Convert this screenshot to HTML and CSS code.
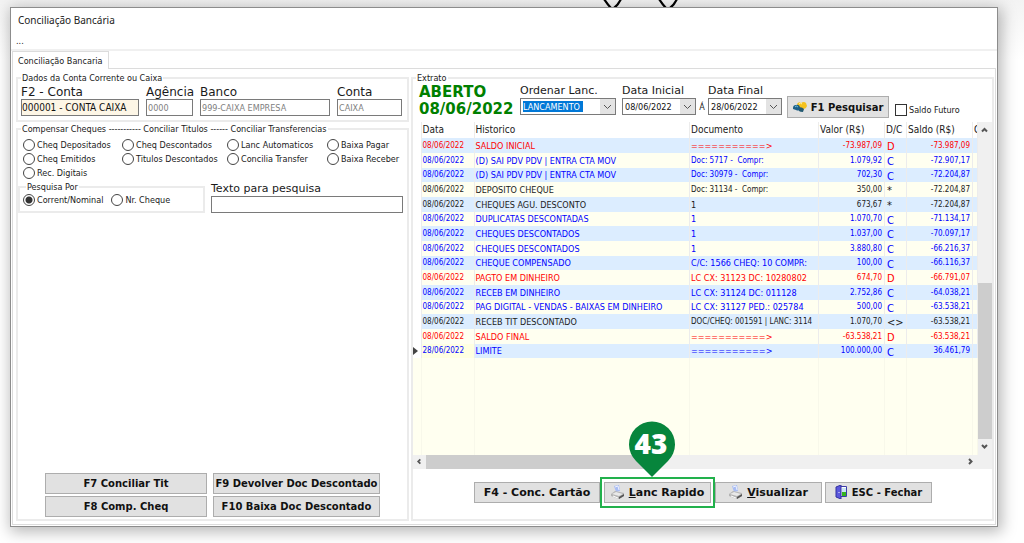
FILE: index.html
```html
<!DOCTYPE html>
<html lang="pt-BR">
<head>
<meta charset="utf-8">
<title>Conciliação Bancária</title>
<link rel="stylesheet" href="styles.css">
</head>
<body>
<svg class="backdrop" width="80" height="8" viewBox="0 0 80 8" aria-hidden="true"><path d="M4 -1C6 2 8 5 11 8M21 -1C19 3 17 6 14 8M59 -1C61 2 63 5 66 8M77 -1C75 3 73 6 70 8" fill="none" stroke="#000" stroke-width="2.2"/></svg>
<main class="window">
  <header class="titlebar">Conciliação Bancária</header>
  <nav class="menubar">...</nav>
  <div class="tabs"><button type="button" class="tab">Conciliação Bancaria</button></div>
  <div class="page">
    <section class="left">
      <fieldset class="group account">
        <legend>Dados da Conta Corrente ou Caixa</legend>
        <div class="account-row">
          <div class="field"><label for="conta">F2 - Conta</label><input id="conta" class="active" value="000001 - CONTA CAIXA"></div>
          <div class="field"><label for="agencia">Agência</label><input id="agencia" value="0000"></div>
          <div class="field"><label for="banco">Banco</label><input id="banco" value="999-CAIXA EMPRESA"></div>
          <div class="field"><label for="num">Conta</label><input id="num" value="CAIXA"></div>
        </div>
      </fieldset>
      <fieldset class="group actions">
        <legend>Compensar Cheques ----------- Conciliar Titulos ------ Conciliar Transferencias</legend>
        <div class="options">
          <label><input type="radio" name="op">Cheq Depositados</label>
          <label><input type="radio" name="op">Cheq Descontados</label>
          <label><input type="radio" name="op">Lanc Automaticos</label>
          <label><input type="radio" name="op">Baixa Pagar</label>
          <label><input type="radio" name="op">Cheq Emitidos</label>
          <label><input type="radio" name="op">Titulos Descontados</label>
          <label><input type="radio" name="op">Concilia Transfer</label>
          <label><input type="radio" name="op">Baixa Receber</label>
          <label><input type="radio" name="op">Rec. Digitais</label>
        </div>
        <div class="search">
          <fieldset class="group by">
            <legend>Pesquisa Por</legend>
            <label><input type="radio" name="by" checked>Corrent/Nominal</label>
            <label><input type="radio" name="by">Nr. Cheque</label>
          </fieldset>
          <div class="field"><label for="texto">Texto para pesquisa</label><input id="texto"></div>
        </div>
        <div class="left-buttons">
          <button type="button" class="btn small">F7 Conciliar Tit</button>
          <button type="button" class="btn small">F9 Devolver Doc Descontado</button>
          <button type="button" class="btn small">F8 Comp. Cheq</button>
          <button type="button" class="btn small">F10 Baixa Doc Descontado</button>
        </div>
      </fieldset>
    </section>
    <fieldset class="group right">
      <legend>Extrato</legend>
      <div class="filters">
        <div class="status"><span>ABERTO</span><span>08/06/2022</span></div>
        <div class="field order"><label for="ordem">Ordenar Lanc.</label><div class="combo"><select id="ordem"><option>LANCAMENTO</option></select><svg width="15" height="15" viewBox="0 0 15 15"><path d="M4 6l3.500 3.500L11 6"/></svg></div></div>
        <div class="field date"><label for="ini">Data Inicial</label><div class="combo"><select id="ini"><option>08/06/2022</option></select><svg width="15" height="15" viewBox="0 0 15 15"><path d="M4 6l3.500 3.500L11 6"/></svg></div></div>
        <span class="until">Á</span>
        <div class="field date"><label for="fim">Data Final</label><div class="combo"><select id="fim"><option>28/06/2022</option></select><svg width="15" height="15" viewBox="0 0 15 15"><path d="M4 6l3.500 3.500L11 6"/></svg></div></div>
        <button type="button" class="btn small find"><svg width="14" height="12" viewBox="0 0 14 12"><path d="M4 3Q6 0 8 2Q11 0 13 2L14 5Q13 8 10 8L6 7z" fill="#f4c21f"/><path d="M6 3Q7 1 9 3" fill="none" stroke="#fff3a0"/><path d="M0 7Q0 4 3 4Q6 3 7 6L7 9Q5 10 3 9L0 8z" fill="#1d5f86"/><path d="M2 6Q3 4 5 6" fill="none" stroke="#6fc0dc"/><path d="M6 7Q8 5 11 8L10 11Q7 11 6 10z" fill="#245a72"/></svg>F1 Pesquisar</button>
        <label class="future"><input type="checkbox">Saldo Futuro</label>
      </div>
      <div class="grid">
        <div class="table-wrap">
        <table>
          <colgroup><col class="c-mark"><col class="c-date"><col><col class="c-doc"><col class="c-val"><col class="c-dc"><col class="c-bal"><col class="c-more"></colgroup>
          <thead><tr><th></th><th>Data</th><th>Historico</th><th>Documento</th><th>Valor (R$)</th><th>D/C</th><th>Saldo (R$)</th><th>C</th></tr></thead>
          <tbody>
            <tr class="red"><td></td><td>08/06/2022</td><td>SALDO INICIAL</td><td>===========&gt;</td><td>-73.987,09</td><td>D</td><td>-73.987,09</td><td></td></tr>
            <tr class="blue"><td></td><td>08/06/2022</td><td>(D) SAI PDV PDV | ENTRA CTA MOV</td><td class="tight">Doc: 5717 -&nbsp; Compr:</td><td>1.079,92</td><td>C</td><td>-72.907,17</td><td></td></tr>
            <tr class="blue"><td></td><td>08/06/2022</td><td>(D) SAI PDV PDV | ENTRA CTA MOV</td><td class="tight">Doc: 30979 -&nbsp; Compr:</td><td>702,30</td><td>C</td><td>-72.204,87</td><td></td></tr>
            <tr><td></td><td>08/06/2022</td><td>DEPOSITO CHEQUE</td><td class="tight">Doc: 31134 -&nbsp; Compr:</td><td>350,00</td><td>*</td><td>-72.204,87</td><td></td></tr>
            <tr><td></td><td>08/06/2022</td><td>CHEQUES AGU. DESCONTO</td><td>1</td><td>673,67</td><td>*</td><td>-72.204,87</td><td></td></tr>
            <tr class="blue"><td></td><td>08/06/2022</td><td>DUPLICATAS DESCONTADAS</td><td>1</td><td>1.070,70</td><td>C</td><td>-71.134,17</td><td></td></tr>
            <tr class="blue"><td></td><td>08/06/2022</td><td>CHEQUES DESCONTADOS</td><td>1</td><td>1.037,00</td><td>C</td><td>-70.097,17</td><td></td></tr>
            <tr class="blue"><td></td><td>08/06/2022</td><td>CHEQUES DESCONTADOS</td><td>1</td><td>3.880,80</td><td>C</td><td>-66.216,37</td><td></td></tr>
            <tr class="blue"><td></td><td>08/06/2022</td><td>CHEQUE COMPENSADO</td><td>C/C: 1566 CHEQ: 10 COMPR:</td><td>100,00</td><td>C</td><td>-66.116,37</td><td></td></tr>
            <tr class="red"><td></td><td>08/06/2022</td><td>PAGTO EM DINHEIRO</td><td>LC CX: 31123 DC: 10280802</td><td>674,70</td><td>D</td><td>-66.791,07</td><td></td></tr>
            <tr class="blue"><td></td><td>08/06/2022</td><td>RECEB EM DINHEIRO</td><td>LC CX: 31124 DC: 011128</td><td>2.752,86</td><td>C</td><td>-64.038,21</td><td></td></tr>
            <tr class="blue"><td></td><td>08/06/2022</td><td>PAG DIGITAL - VENDAS - BAIXAS EM DINHEIRO</td><td>LC CX: 31127 PED.: 025784</td><td>500,00</td><td>C</td><td>-63.538,21</td><td></td></tr>
            <tr><td></td><td>08/06/2022</td><td>RECEB TIT DESCONTADO</td><td class="tight">DOC/CHEQ: 001591 | LANC: 3114</td><td>1.070,70</td><td>&lt;&gt;</td><td>-63.538,21</td><td></td></tr>
            <tr class="red"><td></td><td>08/06/2022</td><td>SALDO FINAL</td><td>===========&gt;</td><td>-63.538,21</td><td>D</td><td>-63.538,21</td><td></td></tr>
            <tr class="blue current"><td><svg width="5" height="8" viewBox="0 0 5 8"><path d="M0 0L5 4L0 8z" fill="#444"/></svg></td><td>28/06/2022</td><td>LIMITE</td><td>===========&gt;</td><td>100.000,00</td><td>C</td><td>36.461,79</td><td></td></tr>
            <tr class="rest"><td></td><td></td><td></td><td></td><td></td><td></td><td></td><td></td></tr>
          </tbody>
        </table>
        </div>
        <div class="vbar"><svg width="13" height="16" viewBox="0 0 13 16"><path d="M4 9.500L6.500 7L9 9.500"/></svg><i></i><svg width="13" height="16" viewBox="0 0 13 16"><path d="M4 6L6.500 8.500L9 6"/></svg></div>
        <div class="hbar"><svg width="13" height="13" viewBox="0 0 15 13"><path d="M8.500 4L6 6.500L8.500 9"/></svg><i></i><svg width="15" height="13" viewBox="0 0 15 13"><path d="M6 4L8.500 6.500L6 9"/></svg></div>
      </div>
      <div class="right-buttons">
        <button type="button" class="btn">F4 - Conc. Cartão</button>
        <div class="highlight">
          <button type="button" class="btn"><svg width="14" height="15" viewBox="0 0 14 15"><path d="M3 1l5-1 1 6-4 1z" fill="#a9bdf4"/><path d="M4 2l3-1 1 4" fill="none" stroke="#eef2ff"/><path d="M0 9l4-3 9 2v3l-5 3-8-3z" fill="#b4b4b4"/><path d="M1 9l4-2 7 2-4 2z" fill="#e9e9e9"/><path d="M8 12l5-3v2l-5 3z" fill="#555"/><path d="M2 11l5 2" stroke="#fff"/></svg><span><u>L</u>anc Rapido</span></button>
          <svg class="pin" width="48" height="56" viewBox="0 0 48 56"><path d="M24 56L8 40A23 23 0 1 1 40 40Z" fill="#07853c"/><text x="23" y="33" text-anchor="middle">43</text></svg>
        </div>
        <button type="button" class="btn view"><svg width="14" height="15" viewBox="0 0 14 15"><path d="M3 1l5-1 1 6-4 1z" fill="#a9bdf4"/><path d="M4 2l3-1 1 4" fill="none" stroke="#eef2ff"/><path d="M0 9l4-3 9 2v3l-5 3-8-3z" fill="#b4b4b4"/><path d="M1 9l4-2 7 2-4 2z" fill="#e9e9e9"/><path d="M8 12l5-3v2l-5 3z" fill="#555"/><path d="M2 11l5 2" stroke="#fff"/></svg><span><u>V</u>isualizar</span></button>
        <button type="button" class="btn small"><svg width="13" height="14" viewBox="0 0 13 14"><path d="M5 1.500h6.500v10H5z" fill="#fff" stroke="#3c3ca8"/><path d="M7 3h4v4H7z" fill="#c9e6f5"/><path d="M7 7h4v4H7z" fill="#35b51e"/><path d="M1 2l5-2v14l-5-2z" fill="#5b58dc" stroke="#3331a0"/><path d="M4 7v1" stroke="#fff"/></svg>ESC - Fechar</button>
      </div>
    </fieldset>
  </div>
</main>
</body>
</html>
```
FILE: styles.css
```css
* { box-sizing: border-box; }
html, body { height: 100%; }
body {
  margin: 0;
  padding: 7px 26px 16px 10px;
  background: linear-gradient(#f3f3f3, #fff 60px);
  font: 9px/12px "DejaVu Sans Condensed", "DejaVu Sans", sans-serif;
  color: #1a1a1a;
}
.backdrop { position: absolute; left: 600px; top: 0; }
.window {
  position: relative;
  height: 100%;
  display: flex;
  flex-direction: column;
  background: #fff;
  border: 1px solid #8c8c8c;
  box-shadow: 2px 3px 14px 2px rgba(0, 0, 0, .28);
}
.titlebar { padding: 3px 7px; height: 26px; font: 10px/18px "Noto Sans", sans-serif; color: #222; }
.menubar { padding: 1px 5px 2px; height: 17px; border-bottom: 2px solid #f0f0f0; }
.tabs { display: flex; padding-left: 1px; height: 17px; }
.tab {
  width: 97px; height: 18px; padding: 0 6px 0 5px; background: #fff;
  border: 1px solid #dcdcdc; border-bottom: 0;
  font: inherit; color: inherit; z-index: 1; white-space: nowrap; text-align: left;
}
.page {
  flex: 1; min-height: 0;
  display: grid; grid-template-columns: 393px minmax(0, 1fr); gap: 2px;
  margin: 0 1px 1px;
  padding: 3px 1px 3px 3px;
  border: 1px solid #dcdcdc;
}
.group { margin: 0; padding: 0; min-width: 0; border: 2px solid #ebebeb; }
legend { margin-left: 3px; padding: 0 1px; white-space: nowrap; line-height: 12px; }
.left { display: flex; flex-direction: column; gap: 1px; min-height: 0; }
.field { display: flex; flex-direction: column; font: 11px/14px "DejaVu Sans", sans-serif; min-width: 0; }
.field label { white-space: nowrap; }
.field input {
  width: 100%; height: 17px; padding: 0 1px; border: 1px solid #7a7a7a; background: #fff;
  font: 9px "DejaVu Sans Condensed", sans-serif; color: #808080;
}
.field .active { padding: 0; background: #fdf6e6; color: #111; font-size: 10px; }
.account { height: 50px; }
.account .field { font-size: 12px; }
.account-row { display: grid; grid-template-columns: 118px 47px 1fr 65px; gap: 7px; padding: 1px 5px 0 3px; }
.actions { flex: 1; display: flex; flex-direction: column; }
.options { display: grid; grid-template-columns: 99px 105px 100px auto; grid-auto-rows: 14px; padding: 3px 0 1px 5px; }
.options label, .by label, .future { display: flex; align-items: center; gap: 2px; white-space: nowrap; }
input[type="radio"] {
  appearance: none; flex: none; width: 12px; height: 12px; margin: 0;
  border: 1px solid #444; border-radius: 50%; background: #fff;
}
input[type="radio"]:checked { background: radial-gradient(#333 0 3px, #fff 4px); }
.search { display: flex; gap: 6px; }
.by { display: flex; gap: 8px; width: 187px; height: 32px; padding: 0 3px; }
.by label { height: 14px; }
.search .field { width: 192px; padding-top: 1px; }
.left-buttons {
  display: grid; grid-template-columns: 162px 167px; gap: 2px 6px;
  margin: auto 0 2px 27px;
}
.btn {
  display: flex; align-items: center; justify-content: center; gap: 4px;
  height: 21px; padding: 0; border: 1px solid #adadad; background: #e1e1e1;
  font: bold 11px/13px "DejaVu Sans", sans-serif; color: #111; white-space: nowrap;
}
.small { font-size: 10px; }
.right { display: flex; flex-direction: column; }
.filters { display: flex; padding: 0 0 0 6px; height: 38px; }
.status { display: flex; flex-direction: column; width: 101px; font: bold 15px/17px "DejaVu Sans", sans-serif; color: #008000; }
.combo { position: relative; display: flex; height: 17px; border: 1px solid #7a7a7a; }
.combo select {
  appearance: none; flex: 1; min-width: 0; padding: 0 2px; border: 0; background: #fff;
  font: 9px "DejaVu Sans Condensed", sans-serif; color: #111;
}
.combo svg { background: #e3e3e3; flex: none; }
.combo path, .vbar path, .hbar path { fill: none; stroke: #555; }
.order { width: 96px; margin-right: 6px; }
.order select { margin: 2px 17px 2px 2px; padding: 0; background: #0078d7; color: #fff; }
.date { width: 74px; }
.until { width: 12px; padding-top: 17px; text-align: center; }
.find { width: 102px; height: 22px; margin: 12px 6px 0 5px; }
.future { height: 14px; margin-top: 19px; }
.future input { appearance: none; width: 12px; height: 12px; margin: 0; border: 1px solid #333; }
.grid { flex: 1; min-height: 0; display: grid; grid-template: minmax(0, 1fr) 14px / minmax(0, 1fr) 14px; background: #f0f0f0; }
.table-wrap { overflow: hidden; background: #fffff0; }
table { width: 100%; height: 100%; table-layout: fixed; border-collapse: collapse; }
.c-mark { width: 8px; } .c-date { width: 53px; } .c-doc { width: 129px; }
.c-val { width: 66px; } .c-dc { width: 22px; } .c-bal { width: 66px; } .c-more { width: 5px; }
th, td { padding: 0 2px 0 1px; border-right: 1px solid #ececec; overflow: hidden; white-space: nowrap; }
th { height: 16px; background: #fff; font: 10px/14px "DejaVu Sans Condensed", sans-serif; text-align: left; }
td { height: 15px; font: 9px/12px "DejaVu Sans Condensed", sans-serif; }
tr:nth-child(3n) td { height: 14px; }
tbody tr:nth-child(odd) td { background: #dcedff; }
tbody tr td:first-child { background: #fff; padding: 0; }
td:nth-child(5), td:nth-child(7) { text-align: right; }
td:nth-child(2), td:nth-child(5), td:nth-child(7), .tight { font-size: 8px; }
td:nth-child(6) { padding: 2px 0 0 2px; font-size: 11px; line-height: 11px; }
.red { color: #f00; }
.blue { color: #00f; }
tbody .current td:nth-child(2) { background: #ffffe1; }
tbody .rest td, tbody .rest td:first-child { height: auto; background: #fffff0; border-color: #f8f8ea; }
td svg { display: block; }
.vbar { display: flex; flex-direction: column; }
.vbar i { flex: 1; margin-top: 145px; background: #cdcdcd; }
.hbar { display: flex; }
.hbar i { flex: none; width: 40%; background: #cdcdcd; }
.hbar svg:last-child { margin-left: auto; }
.vbar path, .hbar path { stroke-width: 2; }
.right-buttons { display: flex; align-items: center; height: 50px; padding: 0 0 4px 61px; }
.right-buttons .btn { width: 107px; }
.right-buttons > .btn:first-child { width: 126px; }
.highlight { position: relative; padding: 3px 2px; border: 2px solid #22b14c; }
.pin { position: absolute; left: 26px; top: -58px; }
.pin text { font: 800 28px "Open Sans", sans-serif; fill: #fff; }
.right-buttons .view { margin-right: 3px; }
```
